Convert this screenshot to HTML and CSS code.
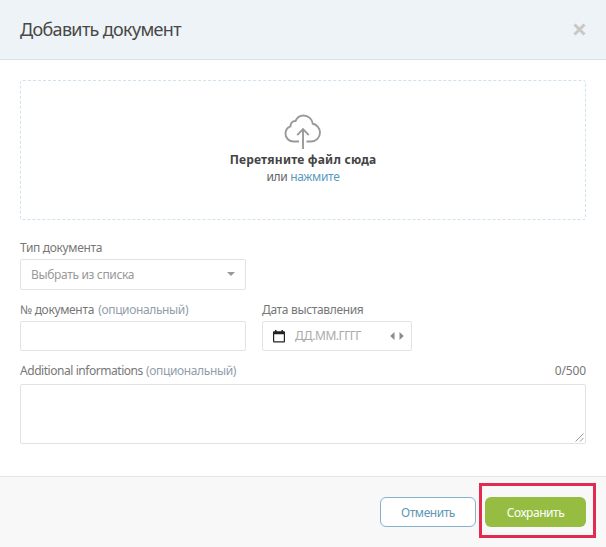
FILE: index.html
```html
<!DOCTYPE html>
<html lang="ru">
<head>
<meta charset="utf-8">
<title>Добавить документ</title>
<link rel="stylesheet" href="styles.css">
</head>
<body>
<div class="modal">
  <header class="modal-header">
    <h1>Добавить документ</h1>
    <svg class="close" width="13" height="13" viewBox="0 0 13 13"><path d="M1.500 1.500l10 10M11.500 1.500l-10 10"/></svg>
  </header>
  <main class="modal-body">
    <section class="dropzone">
      <svg class="cloud" width="38" height="36" viewBox="0 0 38 36"><path d="M15 27.500H9.500C5 27.500 1.500 24 1.500 19.700c0-3.500 2-6.300 5-7.400C6.300 9 8.800 6.700 11.500 7c1.500-3.300 4.500-5.500 8-5.500 4.800 0 8.700 3.500 9.300 8.300 4 .7 7.200 4.300 7.200 8.700 0 5-3.900 9-8.900 9h-4.600M19 35V15.500M13.200 21.200L19 15.200l5.800 6"/></svg>
      <strong>Перетяните файл сюда</strong>
      <span class="hint">или <a>нажмите</a></span>
    </section>
    <div class="field type">
      <label>Тип документа</label>
      <div class="control select"><span>Выбрать из списка</span><i class="caret"></i></div>
    </div>
    <div class="row">
      <div class="field number">
        <label>№ документа <em>(опциональный)</em></label>
        <div class="control"></div>
      </div>
      <div class="field date">
        <label>Дата выставления</label>
        <div class="control date-control">
          <svg width="12" height="13" viewBox="0 0 12 13"><path fill="#222" fill-rule="evenodd" d="M1 1.200h1V0h1.500v1.200h5V0H10v1.200h1a1 1 0 0 1 1 1V11.500a1 1 0 0 1-1 1H1a1 1 0 0 1-1-1V2.200a1 1 0 0 1 1-1zM1.200 4.300v7h9.600v-7z"/></svg>
          <span>ДД.ММ.ГГГГ</span>
          <svg class="arrows" width="14" height="8" viewBox="0 0 14 8"><path fill="#8c8c8c" d="M4.500 0v8L.2 4zM9.500 0v8l4.300-4z"/></svg>
        </div>
      </div>
    </div>
    <div class="field info">
      <div class="label-line"><label class="latin">Additional informations <em>(опциональный)</em></label><span class="counter">0/500</span></div>
      <div class="control area"><svg width="9" height="9" viewBox="0 0 9 9"><path d="M.5 8.500l8-8M5 8.500l3.500-3.500"/></svg></div>
    </div>
  </main>
  <footer class="modal-footer">
    <button class="cancel">Отменить</button>
    <div class="highlight"><button class="save">Сохранить</button></div>
  </footer>
</div>
</body>
</html>
```
FILE: styles.css
```css
* { box-sizing: border-box; }
body { margin: 0; background: #fff; font: 12px/16px "Noto Sans", "Open Sans", sans-serif; letter-spacing: -.34px; color: #777; }
.modal { width: 606px; height: 547px; display: flex; flex-direction: column; overflow: hidden; }
.modal-header { height: 60px; flex: none; display: flex; align-items: center; justify-content: space-between; padding: 0 20px 1px; background: #edf3f6; border-bottom: 1px solid #d3e3ec; }
h1 { margin: 0; font-size: 18px; line-height: 24px; font-weight: 400; color: #484848; letter-spacing: -.67px; }
.close { fill: none; stroke: #c8c8c8; stroke-width: 3; }
.modal-body { flex: none; height: 416px; padding: 20px 20px 0; }
.dropzone { height: 140px; border: 1px dashed #cfe2ee; border-radius: 3px; display: flex; flex-direction: column; align-items: center; padding-top: 33px; }
.cloud { fill: none; stroke: #999; stroke-width: 1.9; flex: none; }
strong { margin-top: 1px; line-height: 17px; color: #444; letter-spacing: .2px; }
.hint { line-height: 17px; color: #666; }
a { color: #5a9bc0; }
.field { display: flex; flex-direction: column; }
label, .counter { height: 19px; line-height: 16px; white-space: nowrap; }
.counter { letter-spacing: -.15px; }
.latin { letter-spacing: -.45px; }
em { font-style: normal; color: #929eab; letter-spacing: -.37px; margin-left: 1.500px; }
.latin em { margin-left: .5px; }
.type { width: 226px; margin-top: 20px; }
.row { display: flex; gap: 16px; margin-top: 12px; }
.number { width: 226px; }
.date { width: 150px; }
.control { height: 30px; border: 1px solid #e2e2e2; border-radius: 2px; background: #fff; display: flex; align-items: center; color: #999; }
.select { height: 31px; justify-content: space-between; padding: 0 10px; }
.caret { border: 4px solid transparent; border-top-color: #999; border-bottom: 0; margin-bottom: 2px; }
.date-control { padding: 0 7px 0 10px; }
.date-control span { margin-left: 10px; color: #aaa; letter-spacing: -.5px; }
.arrows { margin-left: auto; }
.info { margin-top: 12px; }
.label-line { display: flex; justify-content: space-between; height: 21px; }
.area { height: 60px; align-items: flex-end; justify-content: flex-end; padding: 1px; }
.area svg { fill: none; stroke: #999; stroke-width: 1; }
.modal-footer { flex: 1; border-top: 1px solid #e4e4e4; background: #f8f8f8; display: flex; align-items: flex-start; justify-content: flex-end; gap: 3px; padding: 6px 10px 0; }
button { font: inherit; padding: 1px 0 0; border-radius: 6px; height: 30px; letter-spacing: -.45px; }
.cancel { width: 96px; margin-top: 14px; background: #fff; border: 1px solid #84b2cb; color: #6097b4; }
.highlight { width: 117px; height: 55px; border: 3px solid #e32a50; padding: 11px 0 0 3px; }
.save { display: block; width: 101px; background: #96bd42; color: #fff; border: 0; }
```
